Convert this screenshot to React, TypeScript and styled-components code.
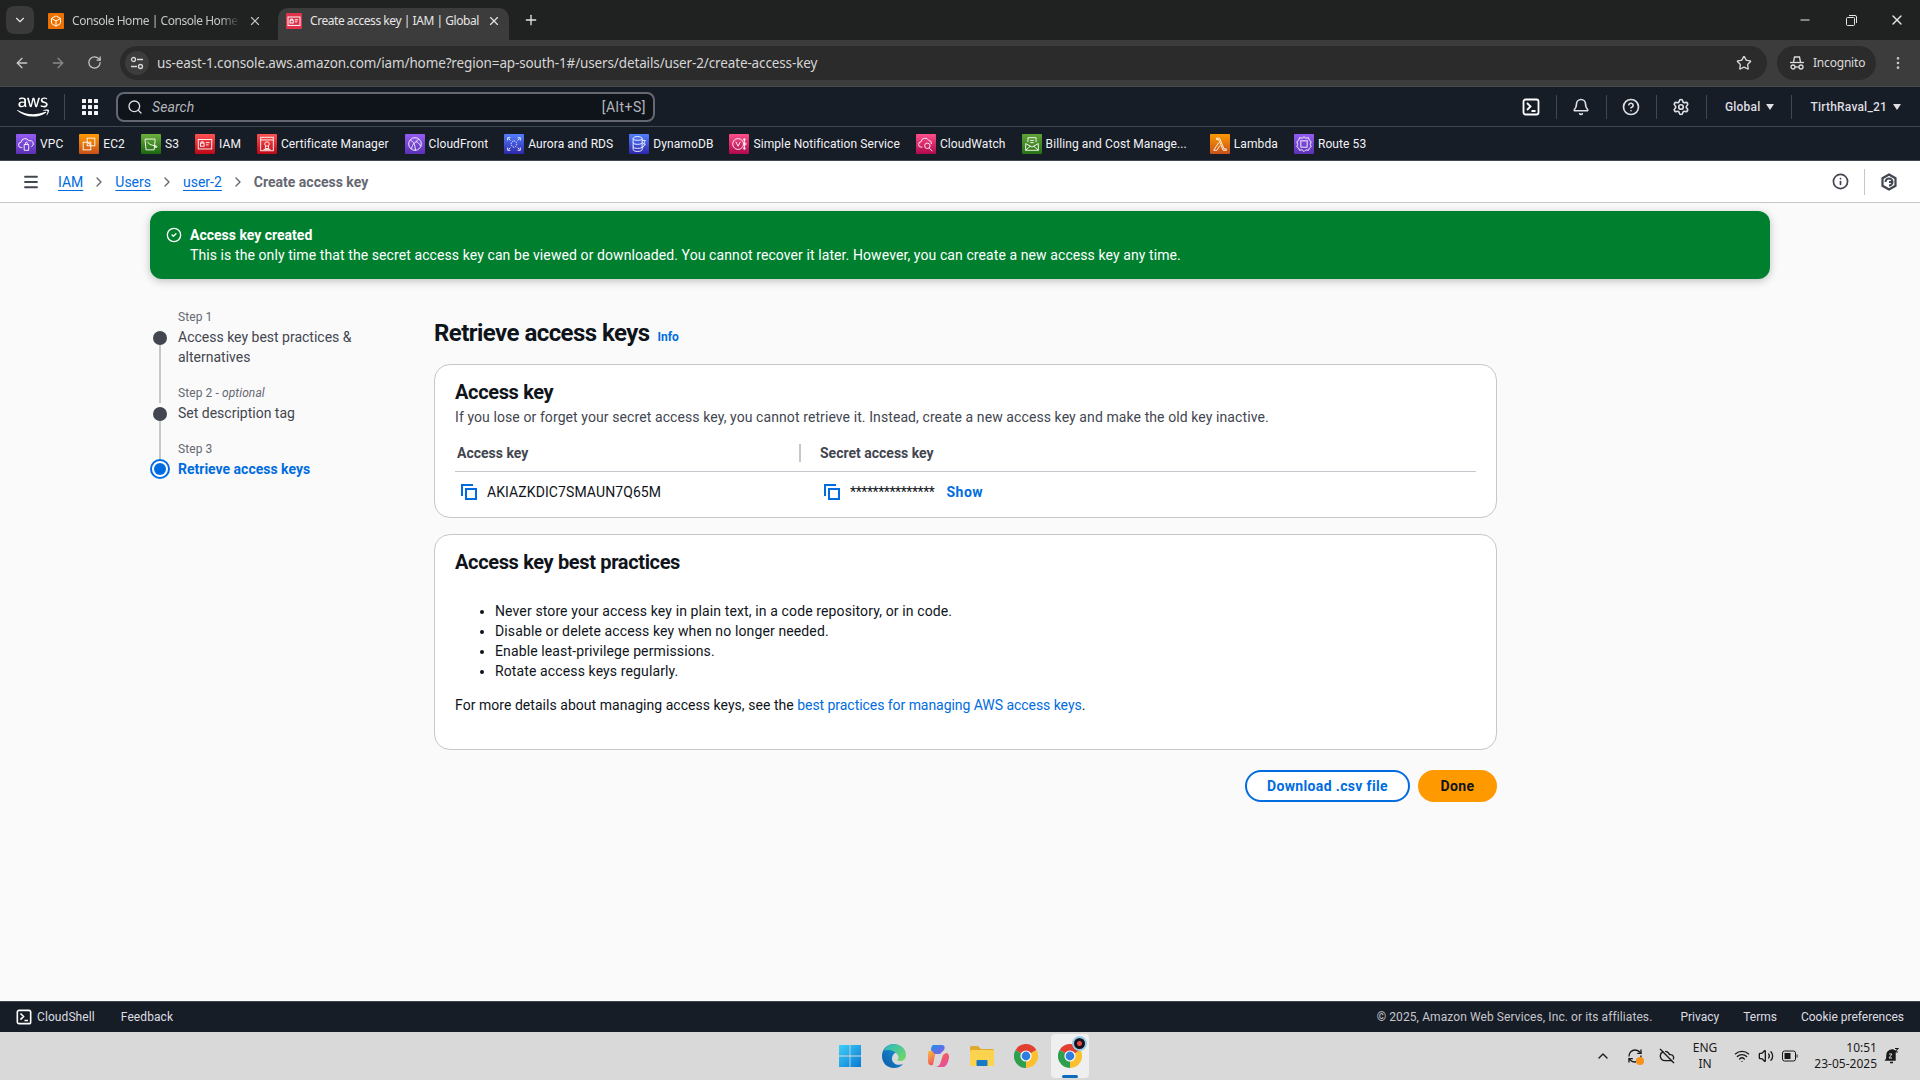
import React from 'react';
import styled, { createGlobalStyle } from 'styled-components';
import {
  ArrowLeft,
  ArrowRight,
  RotateCw,
  Star,
  X,
  Plus,
  ChevronDown,
  ChevronRight,
  ChevronUp,
  EllipsisVertical,
  Minus,
  Search,
  Bell,
  CircleHelp,
  Settings,
  Info,
  Wifi,
  Volume2,
  CloudOff,
  RefreshCw,
  CircleCheck,
  Menu,
  Box,
} from 'lucide-react';
import { FaAws } from 'react-icons/fa';

const GlobalStyle = createGlobalStyle`
  * { box-sizing: border-box; }
  html, body { margin: 0; padding: 0; height: 100%; overflow: hidden; }
  body {
    font-family: Roboto, "Liberation Sans", sans-serif;
    font-size: 14px;
    line-height: 20px;
    letter-spacing: 0.09px;
    color: #0f141a;
    background: #fafafa;
  }
  #root { height: 100%; }
`;

const chromeFont = `"Noto Sans", "Open Sans", sans-serif`;

const Page = styled.div`
  height: 100vh;
  display: flex;
  flex-direction: column;
`;

/* browser chrome */
const TabStrip = styled.div`
  height: 40px;
  flex: none;
  background: #202221;
  display: flex;
  align-items: flex-end;
  padding-left: 6px;
  font-family: ${chromeFont};
  font-size: 12px;
  letter-spacing: -0.45px;
  color: #e3e3e3;
`;

const TabListButton = styled.div`
  width: 28px;
  height: 28px;
  margin: 0 6px 6px 0;
  border-radius: 8px;
  background: #3a3a3a;
  display: flex;
  align-items: center;
  justify-content: center;
`;

const Tab = styled.div<{ $active?: boolean; $w: number }>`
  position: relative;
  width: ${p => p.$w}px;
  height: 32px;
  margin-right: 4px;
  padding: 0 ${p => (p.$active ? 8 : 12)}px 6px 8px;
  display: flex;
  align-items: center;
  gap: 8px;
  border-radius: 10px 10px 0 0;
  background: ${p => (p.$active ? '#3c3c3c' : 'transparent')};
  color: ${p => (p.$active ? '#e6e6e6' : '#c4c7c5')};
`;

const Favicon = styled.span<{ $bg: string }>`
  width: 16px;
  height: 16px;
  flex: none;
  background: ${p => p.$bg};
  display: flex;
  align-items: center;
  justify-content: center;
  border-radius: 1px;
`;

const TabTitle = styled.span<{ $fade?: boolean }>`
  flex: 1;
  white-space: nowrap;
  ${p => p.$fade && 'mask-image: linear-gradient(to right, #000 88%, transparent);'}
`;

const NewTab = styled.div`
  margin: 0 0 8px 6px;
  width: 24px;
  height: 24px;
  display: flex;
  align-items: center;
  justify-content: center;
`;

const WindowControls = styled.div`
  margin-left: auto;
  height: 40px;
  display: flex;
  align-items: center;
`;

const WindowButton = styled.div`
  width: 46px;
  height: 32px;
  display: flex;
  align-items: center;
  justify-content: center;
  color: #e6e6e6;
`;

const Toolbar = styled.div`
  height: 47px;
  flex: none;
  background: #3c3c3c;
  border-bottom: 1px solid #4a4a4a;
  display: flex;
  align-items: center;
  padding: 0 4px 1px 4px;
  font-family: ${chromeFont};
  color: #c7c7c7;
`;

const ToolButton = styled.div<{ $dim?: boolean }>`
  width: 36px;
  height: 34px;
  flex: none;
  display: flex;
  align-items: center;
  justify-content: center;
  color: ${p => (p.$dim ? '#8a8a8a' : '#c7c7c7')};
`;

const AddressBar = styled.div`
  flex: 1;
  height: 34px;
  margin-left: 8px;
  border-radius: 17px;
  background: #2b2b2b;
  display: flex;
  align-items: center;
  padding: 0 15px 0 5px;
  font-size: 13.5px;
  letter-spacing: -0.13px;
  color: #d6d6d6;
`;

const SiteInfo = styled.div`
  width: 24px;
  height: 24px;
  margin-right: 8px;
  border-radius: 50%;
  background: #3c3c3c;
  display: flex;
  align-items: center;
  justify-content: center;
`;

const Url = styled.span`
  flex: 1;
  white-space: nowrap;
`;

const IncognitoPill = styled.div`
  width: 99px;
  height: 34px;
  margin: 0 4px 0 10px;
  border-radius: 17px;
  background: #2b2b2b;
  display: flex;
  align-items: center;
  gap: 8px;
  padding-left: 12px;
  font-size: 12px;
  letter-spacing: -0.2px;
  color: #dcdcdc;
`;

/* aws top nav */
const TopNav = styled.div`
  height: 40px;
  flex: none;
  background: #161d26;
  border-bottom: 1px solid #414750;
  display: flex;
  align-items: center;
  padding-left: 17px;
  color: #dedee3;
`;

const LogoSlot = styled.div`
  width: 48px;
  height: 26px;
  display: flex;
  align-items: center;
  color: #fff;
  border-right: 1px solid #414750;
`;

const Launcher = styled.div`
  width: 51px;
  padding-left: 17px;
  display: flex;
  align-items: center;
`;

const SearchBox = styled.div`
  width: 539px;
  height: 30px;
  border: 2px solid #656871;
  border-radius: 8px;
  background: #0f141a;
  display: flex;
  align-items: center;
  gap: 8px;
  padding: 0 7px 0 9px;
  font-size: 14px;
  color: #b4b4bb;
`;

const SearchHint = styled.span`
  font-style: italic;
  flex: 1;
  margin-left: 1px;
`;

const ShortcutHint = styled.span`
  letter-spacing: 0.5px;
`;

const NavRight = styled.div`
  margin-left: auto;
  display: flex;
  align-items: center;
  font-size: 12px;
  font-weight: 500;
  letter-spacing: 0.2px;
`;

const NavItem = styled.div<{ $left?: number; $right?: number }>`
  height: 24px;
  display: flex;
  align-items: center;
  gap: 6px;
  padding: 0 ${p => p.$right ?? 15.5}px 0 ${p => p.$left ?? 15.5}px;
  & + & { border-left: 1px solid #414750; }
`;

const Caret = styled.span`
  width: 0;
  height: 0;
  border-left: 4px solid transparent;
  border-right: 4px solid transparent;
  border-top: 6px solid #dedee3;
`;

const Favorites = styled.div`
  height: 34px;
  flex: none;
  background: #161d26;
  border-bottom: 1px solid #414750;
  display: flex;
  align-items: center;
  gap: 16px;
  padding-left: 16px;
  font-size: 12px;
  letter-spacing: 0.09px;
  color: #f3f3f7;
`;

const Favorite = styled.div<{ $extra?: number }>`
  display: flex;
  align-items: center;
  gap: 4px;
  white-space: nowrap;
  margin-right: ${p => p.$extra ?? 0}px;
`;

const ServiceBadge = styled.span<{ $from: string; $to: string }>`
  width: 20px;
  height: 20px;
  flex: none;
  border-radius: 1px;
  background: linear-gradient(0deg, ${p => p.$from}, ${p => p.$to});
  display: flex;
  align-items: center;
  justify-content: center;
`;

const BreadcrumbBar = styled.div`
  height: 42px;
  flex: none;
  background: #fff;
  border-bottom: 1px solid #c6c6cd;
  display: flex;
  align-items: center;
  padding: 0 22px 0 22px;
  color: #656871;
`;

const Crumbs = styled.div`
  display: flex;
  align-items: center;
  gap: 8px;
  margin-left: 18px;
  font-size: 14px;
  letter-spacing: 0;
  flex: 1;
`;

const CrumbLink = styled.a`
  color: #006ce0;
  text-decoration: underline;
  text-underline-offset: 3px;
`;

const CrumbCurrent = styled.span`
  font-weight: 700;
  color: #656871;
`;

const HelpTools = styled.div`
  display: flex;
  align-items: center;
  color: #424650;
`;

const HelpTool = styled.div`
  height: 26px;
  display: flex;
  align-items: center;
  padding: 0 15px;
  & + & { border-left: 1px solid #c6c6cd; padding-right: 0; }
  &:first-child { padding-left: 0; }
`;

/* page body */
const Main = styled.main`
  flex: 1;
  min-height: 0;
  padding: 8px 150px 0;
`;

const Flash = styled.div`
  height: 68px;
  padding: 14px 16px;
  border-radius: 12px;
  background: #00802f;
  color: #fff;
  display: flex;
  gap: 8px;
  box-shadow: 0 2px 8px rgba(15, 20, 26, 0.25);
`;

const FlashIcon = styled.div`
  margin-top: 2px;
  height: 16px;
  flex: none;
`;

const FlashTitle = styled.div`
  font-weight: 700;
  letter-spacing: 0;
`;

const Columns = styled.div`
  margin-top: 28px;
  display: grid;
  grid-template-columns: 284px 1063px;
`;

const StepList = styled.ol`
  list-style: none;
  margin: 0;
  padding: 0;
`;

const Step = styled.li<{ $last?: boolean }>`
  display: grid;
  grid-template-columns: 20px 210px;
  column-gap: 8px;
  padding-bottom: ${p => (p.$last ? 0 : 16)}px;
`;

const Rail = styled.div<{ $row: number }>`
  grid-column: 1;
  grid-row: ${p => p.$row};
  display: flex;
  flex-direction: column;
  align-items: center;
`;

const RailLine = styled.div<{ $extend?: boolean }>`
  width: 2px;
  flex: 1;
  background: #c6c6cd;
  ${p => p.$extend && 'margin-bottom: -16px;'}
`;

const StepDot = styled.div`
  width: 14px;
  height: 14px;
  margin-top: 4px;
  border-radius: 50%;
  background: #424650;
  flex: none;
`;

const StepRing = styled.div`
  width: 20px;
  height: 20px;
  border: 2px solid #006ce0;
  border-radius: 50%;
  flex: none;
  background: #fff;
  display: flex;
  align-items: center;
  justify-content: center;
  &::after {
    content: '';
    width: 12px;
    height: 12px;
    border-radius: 50%;
    background: #006ce0;
  }
`;

const StepLabel = styled.div`
  grid-column: 2;
  grid-row: 1;
  font-size: 12px;
  color: #656871;
`;

const StepName = styled.div<{ $active?: boolean }>`
  grid-column: 2;
  grid-row: 2;
  letter-spacing: 0;
  color: ${p => (p.$active ? '#006ce0' : '#424650')};
  font-weight: ${p => (p.$active ? 700 : 400)};
`;

const Content = styled.div`
  padding-top: 10px;
`;

const PageHeading = styled.div`
  display: flex;
  align-items: baseline;
  gap: 8px;
  margin-bottom: 15px;
`;

const PageTitle = styled.h1`
  margin: 0;
  font-size: 24px;
  line-height: 32px;
  font-weight: 700;
  letter-spacing: -0.55px;
`;

const InfoLink = styled.a`
  font-size: 12px;
  font-weight: 700;
  letter-spacing: 0;
  color: #006ce0;
`;

const Card = styled.section<{ $padBottom: number }>`
  background: #fff;
  border: 1px solid #c6c6cd;
  border-radius: 16px;
  padding: 15px 20px ${p => p.$padBottom}px;
  & + & { margin-top: 16px; }
`;

const CardTitle = styled.h2`
  margin: 0;
  font-size: 20px;
  line-height: 24px;
  font-weight: 700;
  letter-spacing: -0.35px;
`;

const CardDescription = styled.p`
  margin: 3px 0 0;
  color: #424650;
`;

const KeyHeader = styled.div`
  display: grid;
  grid-template-columns: 344px 1fr;
  margin-top: 16px;
  padding-bottom: 8px;
  border-bottom: 1px solid #c6c6cd;
  align-items: center;
  font-weight: 700;
  letter-spacing: 0;
  color: #424650;
`;

const KeyHeaderCell = styled.div<{ $divided?: boolean }>`
  padding-left: ${p => (p.$divided ? 19 : 2)}px;
  ${p => p.$divided && 'border-left: 2px solid #c6c6cd; line-height: 18px;'}
`;

const KeyRow = styled.div`
  display: grid;
  grid-template-columns: 345px 1fr;
  padding-top: 10px;
`;

const KeyCell = styled.div<{ $inset: number }>`
  display: flex;
  align-items: center;
  gap: 10px;
  padding-left: ${p => p.$inset}px;
`;

const Masked = styled.span`
  letter-spacing: -0.4px;
`;

const ShowLink = styled.a`
  margin-left: 2px;
  font-weight: 700;
  letter-spacing: 0.5px;
  color: #006ce0;
`;

const Practices = styled.ul`
  margin: 27px 0 0;
  padding-left: 40px;
  letter-spacing: 0.12px;
`;

const Note = styled.p`
  margin: 14px 0 0;
  letter-spacing: 0.04px;
`;

const TextLink = styled.a`
  color: #006ce0;
  letter-spacing: -0.05px;
`;

const Actions = styled.div`
  display: flex;
  justify-content: flex-end;
  gap: 8px;
  margin-top: 20px;
`;

const Button = styled.div<{ $primary?: boolean; $w: number }>`
  width: ${p => p.$w}px;
  height: 32px;
  border-radius: 16px;
  border: 2px solid ${p => (p.$primary ? '#ff9900' : '#006ce0')};
  background: ${p => (p.$primary ? '#ff9900' : '#fff')};
  color: ${p => (p.$primary ? '#0f141a' : '#006ce0')};
  font-weight: 700;
  letter-spacing: 0.35px;
  display: flex;
  align-items: center;
  justify-content: center;
`;

/* footer */
const Footer = styled.footer`
  height: 31px;
  flex: none;
  background: #161d26;
  border-top: 1px solid #414750;
  display: flex;
  align-items: center;
  padding: 0 16px;
  font-size: 12px;
  color: #dedee3;
`;

const FooterLeft = styled.div`
  display: flex;
  align-items: center;
  gap: 26px;
  flex: 1;
`;

const CloudShell = styled.span`
  display: flex;
  align-items: center;
  gap: 5px;
`;

const FooterRight = styled.div`
  display: flex;
  align-items: center;
  gap: 24px;
  letter-spacing: 0;
`;

const Copyright = styled.span`
  color: #c6c6cd;
  letter-spacing: 0.09px;
  margin-right: 4px;
`;

/* windows taskbar */
const Taskbar = styled.div`
  height: 48px;
  flex: none;
  background: #d9d9d9;
  display: flex;
  align-items: center;
  padding: 0 19px 0 828px;
  font-family: ${chromeFont};
  font-size: 12px;
  letter-spacing: 0;
  color: #1a1a1a;
`;

const TaskIcon = styled.div<{ $active?: boolean }>`
  position: relative;
  width: ${p => (p.$active ? 38 : 44)}px;
  height: 44px;
  margin-left: ${p => (p.$active ? 3 : 0)}px;
  border-radius: 4px;
  display: flex;
  align-items: center;
  justify-content: center;
  background: ${p => (p.$active ? '#efefef' : 'transparent')};
  ${p =>
    p.$active &&
    `&::after {
      content: '';
      position: absolute;
      bottom: 0;
      left: 11px;
      width: 16px;
      height: 3px;
      border-radius: 2px;
      background: #0f6cbd;
    }`}
`;

const Tray = styled.div`
  margin-left: auto;
  display: flex;
  align-items: center;
`;

const TrayIcon = styled.div<{ $w: number }>`
  position: relative;
  width: ${p => p.$w}px;
  display: flex;
  justify-content: center;
`;

const OrangeDot = styled.span`
  position: absolute;
  right: 7px;
  bottom: -1px;
  width: 8px;
  height: 8px;
  border-radius: 50%;
  background: #f7931a;
`;

const Lang = styled.div`
  width: 40px;
  margin: 0 5px 0 2px;
  text-align: center;
  line-height: 16px;
`;

const Clock = styled.div`
  width: 75px;
  text-align: right;
  line-height: 16px;
`;

const BellSlot = styled.div`
  width: 18px;
  margin-left: 6px;
  display: flex;
  justify-content: center;
`;

const ProfileBadge = styled.span`
  position: absolute;
  top: 2px;
  right: 2px;
  width: 15px;
  height: 15px;
  border-radius: 50%;
  border: 2px solid #9ccbe8;
  background: radial-gradient(circle, #e8484a 0 2px, #14141c 3px);
`;

function CopyGlyph() {
  return (
    <svg width="16" height="16" viewBox="0 0 16 16" fill="none" stroke="#006ce0" strokeWidth="2">
      <path d="M1 12V1h11" />
      <rect x="5" y="5" width="10" height="10" />
    </svg>
  );
}

function ShellGlyph({ size = 18 }: { size?: number }) {
  return (
    <svg width={size} height={size} viewBox="0 0 18 18" fill="none" stroke="#fff" strokeWidth="1.8">
      <rect x="1.5" y="1.5" width="15" height="15" rx="2" />
      <path d="M5 5l3.5 3.500L5 12M9.500 13h4" />
    </svg>
  );
}

function TuneGlyph() {
  return (
    <svg width="14" height="14" viewBox="0 0 14 14" fill="none" stroke="#d8d8d8" strokeWidth="1.3">
      <circle cx="3.5" cy="3.5" r="2" />
      <path d="M7 3.5h6M1 10.5h6" />
      <circle cx="10.5" cy="10.5" r="2" />
    </svg>
  );
}

function IncognitoGlyph() {
  return (
    <svg width="16" height="16" viewBox="0 0 16 16" fill="none" stroke="#dcdcdc" strokeWidth="1.3">
      <path d="M4.500 7l1-5h5l1 5" />
      <path d="M1 7.500h14" />
      <circle cx="4" cy="12" r="2" />
      <circle cx="12" cy="12" r="2" />
      <path d="M6 12h4" />
    </svg>
  );
}

function RestoreGlyph() {
  return (
    <svg width="11" height="11" viewBox="0 0 11 11" fill="none" stroke="#e6e6e6">
      <rect x="0.5" y="2.5" width="8" height="8" rx="1" />
      <path d="M3 .5h6a1.500 1.500 0 0 1 1.500 1.500v6" />
    </svg>
  );
}

function GridGlyph() {
  const dots = [0, 6, 12].flatMap(y => [0, 6, 12].map(x => <rect key={`${x}${y}`} x={x} y={y} width="4" height="4" rx="0.5" />));
  return (
    <svg width="16" height="16" viewBox="0 0 16 16" fill="#f3f3f7">
      {dots}
    </svg>
  );
}

function HexGlyph() {
  return (
    <svg width="18" height="18" viewBox="0 0 18 18" fill="none" stroke="#424650" strokeWidth="2.2">
      <path d="M9 1.500l6.500 3.700v7.600L9 16.500l-6.500-3.700V5.200z" />
      <path d="M5.500 9A3.500 3.500 0 1 1 9 12.500" strokeWidth="2" />
      <path d="M9 9h3.500" strokeWidth="2" />
    </svg>
  );
}

function BellZGlyph() {
  return (
    <svg width="16" height="18" viewBox="0 0 16 18" fill="none" stroke="#1a1a1a" strokeWidth="1.4">
      <path d="M2 13c1-1 1-2 1-5a5 5 0 0 1 8-4v9zM6 15.500h3" fill="#1a1a1a" />
      <path d="M11 1.500h3l-3 3.500h3" strokeWidth="1.1" />
      <path d="M5 7h3L5 11h3" stroke="#d9d9d9" strokeWidth="1" />
    </svg>
  );
}

function BatteryGlyph() {
  return (
    <svg width="16" height="12" viewBox="0 0 16 12" fill="none" stroke="#1a1a1a">
      <rect x="0.5" y="1" width="13" height="10" rx="2" />
      <rect x="2.500" y="3" width="6" height="6" fill="#1a1a1a" stroke="none" />
      <path d="M15 4.500v3" />
    </svg>
  );
}

function WindowsLogo() {
  return (
    <svg width="24" height="24" viewBox="0 0 24 24">
      <defs>
        <linearGradient id="winLogo" x1="0" y1="0" x2="1" y2="1">
          <stop offset="0" stopColor="#3fd0f7" />
          <stop offset="1" stopColor="#0a78d4" />
        </linearGradient>
      </defs>
      <path fill="url(#winLogo)" d="M1 1h10.600v10.600H1zM12.400 1H23v10.600H12.400zM1 12.400h10.600V23H1zM12.400 12.400H23V23H12.400z" />
    </svg>
  );
}

function EdgeLogo() {
  return (
    <svg width="24" height="24" viewBox="0 0 24 24">
      <defs>
        <linearGradient id="edgeTop" x1="0" y1="0" x2="1" y2="1">
          <stop offset="0" stopColor="#2bb6c8" />
          <stop offset="1" stopColor="#78dc5c" />
        </linearGradient>
        <linearGradient id="edgeBlue" x1="0" y1="1" x2="1" y2="0">
          <stop offset="0" stopColor="#0c59a4" />
          <stop offset="1" stopColor="#1b9de2" />
        </linearGradient>
      </defs>
      <path fill="url(#edgeBlue)" d="M12 0C5 0 0 5 0 12s5 12 12 12c4 0 7-1.500 9-4-3 1.500-8 1-10-2-2-3-1-7 2-9L20 6C18 2 15 0 12 0z" />
      <path fill="url(#edgeTop)" d="M2 7C4 2 8 0 12 0c7 0 12 5 12 11 0 4-3 6-6 6-2 0-3-1-3-1 2-1 2-4 0-6-3-4-10-5-13-3z" />
    </svg>
  );
}

function CopilotLogo() {
  return (
    <svg width="24" height="24" viewBox="0 0 24 24">
      <defs>
        <linearGradient id="copA" x1="0" y1="0" x2="1" y2="1">
          <stop offset="0" stopColor="#1b8fe8" />
          <stop offset="1" stopColor="#8f5be8" />
        </linearGradient>
        <linearGradient id="copB" x1="0" y1="0" x2="1" y2="1">
          <stop offset="0" stopColor="#f9c23c" />
          <stop offset="0.5" stopColor="#f25c5c" />
          <stop offset="1" stopColor="#e24bb5" />
        </linearGradient>
      </defs>
      <path fill="url(#copA)" d="M8 1h8c3 0 3 3 2 5l-4 4H7L5 6c0-3 1-5 3-5z" />
      <path fill="url(#copB)" d="M2 9c0-2 2-3 4-2l3 3-2 11c-4 1-5-1-5-4zM9 23h8c3 0 5-4 6-9 .5-3-1-5-3-5l-3 2-3 9c-1 2-3 3-5 3z" />
    </svg>
  );
}

function FolderLogo() {
  return (
    <svg width="24" height="22" viewBox="0 0 24 22">
      <path fill="#e0a92e" d="M0 2.500A1.500 1.500 0 0 1 1.500 1h6.500l3 3h11.500A1.500 1.500 0 0 1 24 5.500V9H0z" />
      <rect y="5" width="24" height="16" rx="1.500" fill="#fcd34e" />
      <rect x="6.500" y="15" width="11" height="6" rx="1" fill="#1579c7" />
    </svg>
  );
}

function ChromeLogo() {
  return (
    <svg width="24" height="24" viewBox="0 0 24 24">
      <path fill="#e0402f" d="M12 12L1.600 6A12 12 0 0 1 22.400 6z" />
      <path fill="#fbc02d" d="M12 12L22.400 6A12 12 0 0 1 12 24z" />
      <path fill="#2e9e4f" d="M12 12L12 24A12 12 0 0 1 1.600 6z" />
      <circle cx="12" cy="12" r="5.600" fill="#fff" />
      <circle cx="12" cy="12" r="4.400" fill="#2f7de1" />
    </svg>
  );
}

// hand drawn service marks, 20x20, white line art
const serviceMarks: Record<string, React.ReactNode> = {
  VPC: (
    <>
      <path d="M6 14H5a3 3 0 0 1-.5-6A4.500 4.500 0 0 1 13 6.500a3.500 3.500 0 0 1 3 6.500" />
      <path d="M8 10.500h5v6.500H8zM9.500 10.500V9a1 1 0 0 1 2 0v1.500" />
    </>
  ),
  EC2: (
    <>
      <rect x="8" y="3.500" width="8.500" height="8.500" />
      <rect x="3.500" y="8" width="8.500" height="8.500" />
      <path d="M9 9.500h2v2" />
    </>
  ),
  S3: (
    <>
      <path d="M3.500 4.500h11v2l-1 10h-9l-1-10z" />
      <path d="M6 8l3 2.500 6.500 2" />
      <circle cx="15.500" cy="13" r="1" />
    </>
  ),
  IAM: (
    <>
      <rect x="2.500" y="5" width="15" height="10.500" />
      <rect x="5" y="9" width="4" height="3.500" />
      <path d="M6 9V7.500h2V9M11 8.500h4M11 11h3" />
    </>
  ),
  'Certificate Manager': (
    <>
      <rect x="3" y="2.500" width="14" height="15" />
      <path d="M3 5.500h14" />
      <circle cx="10" cy="10" r="2.500" />
      <path d="M8.500 12l-.5 3h4l-.5-3M6 16h8" />
    </>
  ),
  CloudFront: (
    <>
      <circle cx="10" cy="10" r="7" />
      <path d="M5 6c3 1 5 4 5.500 11M14 4.500c-1 2-4 3-6 6-1 1.500-2 3-1.500 5M11 7c2 1 4 3 5.500 5.500" />
    </>
  ),
  'Aurora and RDS': (
    <>
      <path d="M3 6V3h3M14 3h3v3M17 14v3h-3M6 17H3v-3M6 6L4 4M14 6l2-2M14 14l2 2M6 14l-2 2" />
      <ellipse cx="10" cy="10" rx="3" ry="3.500" strokeDasharray="1.500 1" />
    </>
  ),
  DynamoDB: (
    <>
      <path d="M3.500 4c0-3 10-3 10 0v12c0 3-10 3-10 0z" />
      <path d="M3.500 4c0 2.500 10 2.500 10 0M3.500 8.500c0 2.500 10 2.500 10 0M3.500 13c0 2.500 10 2.500 10 0" />
      <path d="M13.500 6h3.500l-2 4h2l-3 4" />
    </>
  ),
  'Simple Notification Service': (
    <>
      <circle cx="9" cy="10" r="6" />
      <path d="M6.500 7.500l2.500 5 2.500-5M16 4.500v11" />
      <circle cx="16" cy="5" r="1" />
      <circle cx="17" cy="10" r="1" />
      <circle cx="16" cy="15" r="1" />
    </>
  ),
  CloudWatch: (
    <>
      <path d="M6 13.500H5a3 3 0 0 1-.5-6A4.500 4.500 0 0 1 13 6a3.500 3.500 0 0 1 3 4" />
      <circle cx="11.500" cy="12" r="3" />
      <path d="M13.500 14.500L17 18" />
    </>
  ),
  'Billing and Cost Manage...': (
    <>
      <path d="M3 9.500V17h14V9.500L10 13.500z" />
      <path d="M5.500 8V3h9v5M3 17l5.500-5M17 17l-5.500-5" />
      <path d="M8 6h4M8 8.500h4" />
    </>
  ),
  Lambda: (
    <>
      <path d="M6 3.500h3.500L14.500 15.500H17v1.500h-3.500L8.500 5H6z" />
      <path d="M8.500 8.500L3 17h3.500l3.300-5.300" />
    </>
  ),
  'Route 53': (
    <>
      <path d="M10 2l2 1.500 3-.5 1 3 2 1.500-1 3 1 2.500-2 1.500-1 2.500-3-.5-2 2-2-2-3 .5-1-2.500-2-1.500 1-2.500-1-3L4 6l1-3 3 .5z" />
      <rect x="6.500" y="6.500" width="7" height="7" />
    </>
  ),
};

const favorites = [
  { name: 'VPC', from: '#5a30b5', to: '#945df2' },
  { name: 'EC2', from: '#c8511b', to: '#ff9900' },
  { name: 'S3', from: '#1b660f', to: '#6cae3e' },
  { name: 'IAM', from: '#bd0816', to: '#ff5252' },
  { name: 'Certificate Manager', from: '#bd0816', to: '#ff5252' },
  { name: 'CloudFront', from: '#5a30b5', to: '#945df2' },
  { name: 'Aurora and RDS', from: '#2e27ad', to: '#527fff' },
  { name: 'DynamoDB', from: '#2e27ad', to: '#527fff' },
  { name: 'Simple Notification Service', from: '#b0084d', to: '#ff4f8b' },
  { name: 'CloudWatch', from: '#b0084d', to: '#ff4f8b' },
  { name: 'Billing and Cost Manage...', from: '#277116', to: '#60a337', extra: 7 },
  { name: 'Lambda', from: '#c8511b', to: '#ff9900' },
  { name: 'Route 53', from: '#5a30b5', to: '#945df2' },
];

const bestPractices = [
  'Never store your access key in plain text, in a code repository, or in code.',
  'Disable or delete access key when no longer needed.',
  'Enable least-privilege permissions.',
  'Rotate access keys regularly.',
];

export default function App() {
  return (
    <Page>
      <GlobalStyle />

      <TabStrip>
        <TabListButton><ChevronDown size={14} /></TabListButton>
        <Tab $w={234}>
          <Favicon $bg="#ed7100"><Box size={12} color="#fff" /></Favicon>
          <TabTitle $fade>Console Home | Console Home</TabTitle>
          <X size={14} />
        </Tab>
        <Tab $active $w={231}>
          <Favicon $bg="#dd344c">
            <svg width="16" height="16" viewBox="0 0 20 20" fill="none" stroke="#fff" strokeWidth="1.2">{serviceMarks.IAM}</svg>
          </Favicon>
          <TabTitle>Create access key | IAM | Global</TabTitle>
          <X size={14} />
        </Tab>
        <NewTab><Plus size={16} /></NewTab>
        <WindowControls>
          <WindowButton><Minus size={14} /></WindowButton>
          <WindowButton><RestoreGlyph /></WindowButton>
          <WindowButton><X size={16} /></WindowButton>
        </WindowControls>
      </TabStrip>

      <Toolbar>
        <ToolButton><ArrowLeft size={16} /></ToolButton>
        <ToolButton $dim><ArrowRight size={16} /></ToolButton>
        <ToolButton><RotateCw size={15} /></ToolButton>
        <AddressBar>
          <SiteInfo><TuneGlyph /></SiteInfo>
          <Url>us-east-1.console.aws.amazon.com/iam/home?region=ap-south-1#/users/details/user-2/create-access-key</Url>
          <Star size={16} />
        </AddressBar>
        <IncognitoPill><IncognitoGlyph />Incognito</IncognitoPill>
        <ToolButton><EllipsisVertical size={16} /></ToolButton>
      </Toolbar>

      <TopNav>
        <LogoSlot><FaAws size={32} /></LogoSlot>
        <Launcher><GridGlyph /></Launcher>
        <SearchBox>
          <Search size={16} color="#dedee3" />
          <SearchHint>Search</SearchHint>
          <ShortcutHint>[Alt+S]</ShortcutHint>
        </SearchBox>
        <NavRight>
          <NavItem><ShellGlyph /></NavItem>
          <NavItem><Bell size={18} strokeWidth={2.2} /></NavItem>
          <NavItem><CircleHelp size={18} strokeWidth={2.2} /></NavItem>
          <NavItem><Settings size={18} strokeWidth={2.2} /></NavItem>
          <NavItem $left={18} $right={17}>Global <Caret /></NavItem>
          <NavItem $left={18} $right={19}>TirthRaval_21 <Caret /></NavItem>
        </NavRight>
      </TopNav>

      <Favorites>
        {favorites.map(({ name, from, to, extra }) => (
          <Favorite key={name} $extra={extra}>
            <ServiceBadge $from={from} $to={to}>
              <svg width="18" height="18" viewBox="0 0 20 20" fill="none" stroke="#fff" strokeWidth="1">
                {serviceMarks[name]}
              </svg>
            </ServiceBadge>
            {name}
          </Favorite>
        ))}
      </Favorites>

      <BreadcrumbBar>
        <Menu size={18} color="#424650" strokeWidth={2.4} />
        <Crumbs>
          <CrumbLink>IAM</CrumbLink>
          <ChevronRight size={16} />
          <CrumbLink>Users</CrumbLink>
          <ChevronRight size={16} />
          <CrumbLink>user-2</CrumbLink>
          <ChevronRight size={16} />
          <CrumbCurrent>Create access key</CrumbCurrent>
        </Crumbs>
        <HelpTools>
          <HelpTool><Info size={17} strokeWidth={2.4} /></HelpTool>
          <HelpTool><HexGlyph /></HelpTool>
        </HelpTools>
      </BreadcrumbBar>

      <Main>
        <Flash>
          <FlashIcon><CircleCheck size={16} strokeWidth={2} /></FlashIcon>
          <div>
            <FlashTitle>Access key created</FlashTitle>
            <div>This is the only time that the secret access key can be viewed or downloaded. You cannot recover it later. However, you can create a new access key any time.</div>
          </div>
        </Flash>

        <Columns>
          <StepList>
            <Step>
              <StepLabel>Step 1</StepLabel>
              <Rail $row={2}>
                <StepDot />
                <RailLine $extend />
              </Rail>
              <StepName>Access key best practices &amp; alternatives</StepName>
            </Step>
            <Step>
              <Rail $row={1}><RailLine /></Rail>
              <StepLabel>Step 2 - <em>optional</em></StepLabel>
              <Rail $row={2}>
                <StepDot />
                <RailLine $extend />
              </Rail>
              <StepName>Set description tag</StepName>
            </Step>
            <Step $last>
              <Rail $row={1}><RailLine /></Rail>
              <StepLabel>Step 3</StepLabel>
              <Rail $row={2}><StepRing /></Rail>
              <StepName $active>Retrieve access keys</StepName>
            </Step>
          </StepList>

          <Content>
            <PageHeading>
              <PageTitle>Retrieve access keys</PageTitle>
              <InfoLink>Info</InfoLink>
            </PageHeading>

            <Card $padBottom={15}>
              <CardTitle>Access key</CardTitle>
              <CardDescription>If you lose or forget your secret access key, you cannot retrieve it. Instead, create a new access key and make the old key inactive.</CardDescription>
              <KeyHeader>
                <KeyHeaderCell>Access key</KeyHeaderCell>
                <KeyHeaderCell $divided>Secret access key</KeyHeaderCell>
              </KeyHeader>
              <KeyRow>
                <KeyCell $inset={6}><CopyGlyph />AKIAZKDIC7SMAUN7Q65M</KeyCell>
                <KeyCell $inset={24}>
                  <CopyGlyph />
                  <Masked>***************</Masked>
                  <ShowLink>Show</ShowLink>
                </KeyCell>
              </KeyRow>
            </Card>

            <Card $padBottom={34}>
              <CardTitle>Access key best practices</CardTitle>
              <Practices>
                {bestPractices.map(item => <li key={item}>{item}</li>)}
              </Practices>
              <Note>
                For more details about managing access keys, see the <TextLink>best practices for managing AWS access keys</TextLink>.
              </Note>
            </Card>

            <Actions>
              <Button $w={165}>Download .csv file</Button>
              <Button $primary $w={79}>Done</Button>
            </Actions>
          </Content>
        </Columns>
      </Main>

      <Footer>
        <FooterLeft>
          <CloudShell><ShellGlyph size={16} />CloudShell</CloudShell>
          <span>Feedback</span>
        </FooterLeft>
        <FooterRight>
          <Copyright>© 2025, Amazon Web Services, Inc. or its affiliates.</Copyright>
          <span>Privacy</span>
          <span>Terms</span>
          <span>Cookie preferences</span>
        </FooterRight>
      </Footer>

      <Taskbar>
        <TaskIcon><WindowsLogo /></TaskIcon>
        <TaskIcon><EdgeLogo /></TaskIcon>
        <TaskIcon><CopilotLogo /></TaskIcon>
        <TaskIcon><FolderLogo /></TaskIcon>
        <TaskIcon><ChromeLogo /></TaskIcon>
        <TaskIcon $active><ChromeLogo /><ProfileBadge /></TaskIcon>
        <Tray>
          <TrayIcon $w={32}><ChevronUp size={16} /></TrayIcon>
          <TrayIcon $w={32}><RefreshCw size={16} /><OrangeDot /></TrayIcon>
          <TrayIcon $w={32}><CloudOff size={16} /></TrayIcon>
          <Lang>ENG<br />IN</Lang>
          <TrayIcon $w={24}><Wifi size={16} /></TrayIcon>
          <TrayIcon $w={24}><Volume2 size={16} /></TrayIcon>
          <TrayIcon $w={24}><BatteryGlyph /></TrayIcon>
          <Clock>10:51<br />23-05-2025</Clock>
          <BellSlot><BellZGlyph /></BellSlot>
        </Tray>
      </Taskbar>
    </Page>
  );
}
